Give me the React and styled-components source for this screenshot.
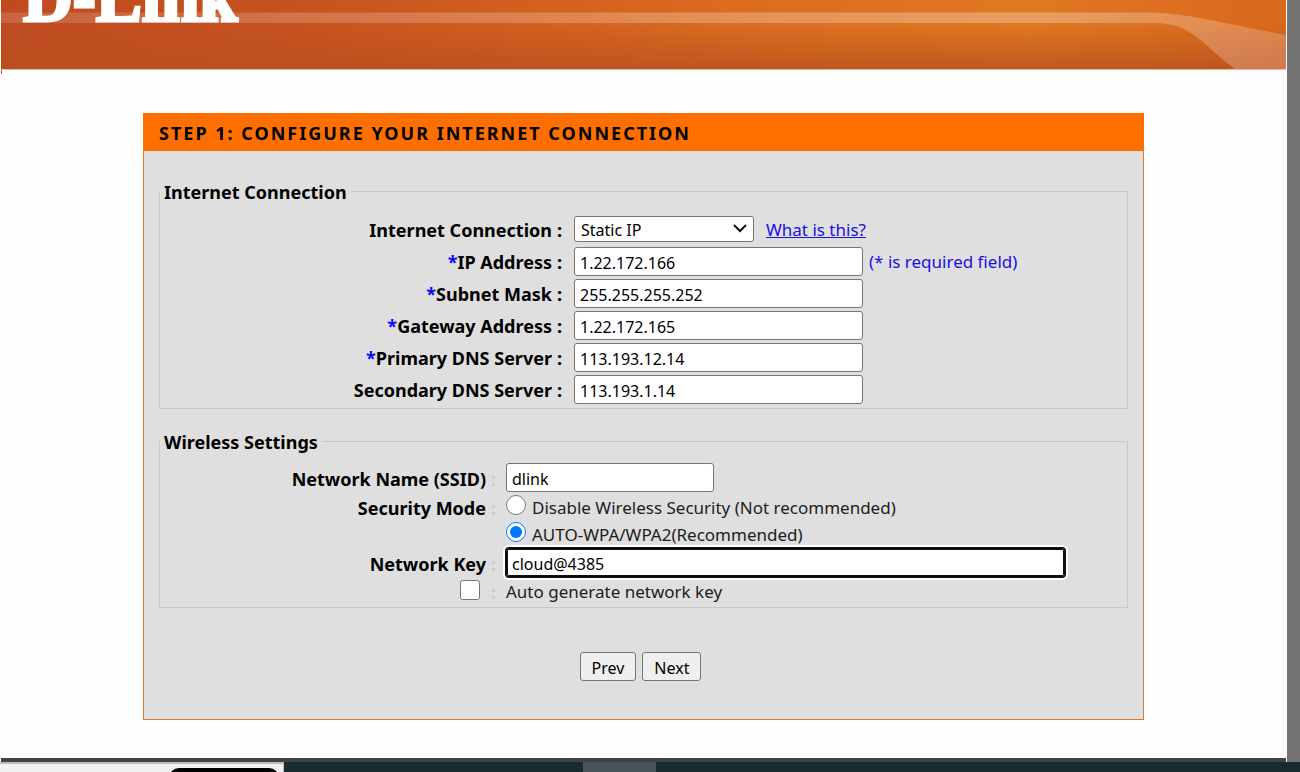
import React from "react";
import styled, { createGlobalStyle } from "styled-components";

const GlobalStyle = createGlobalStyle`
  * { box-sizing: border-box; }
  body {
    margin: 0;
    background: #fefefe;
    color: #000;
    font: 16px/22px "Noto Sans", Tahoma, sans-serif;
  }
  input, select, button { font: inherit; color: inherit; }
`;

const Screen = styled.div`
  display: flex;
  flex-direction: column;
  min-height: 100vh;
`;

const Browser = styled.div`
  display: flex;
  flex: 1;
`;

const Page = styled.div`
  flex: 1;
  min-width: 0;
  display: flex;
  flex-direction: column;
  margin: 0 1px;
`;

const PageEdge = styled.div`
  width: 13px;
  background: #737373;
`;

const Banner = styled.header`
  position: relative;
  height: 70px;
  overflow: hidden;
  border-bottom: 1px solid #e9b79c;
`;

const BannerArt = styled.svg`
  display: block;
  width: 100%;
  height: 69px;
`;

const Logo = styled.div`
  position: absolute;
  left: 22px;
  bottom: 37px;
  font: bold 69px/68px "Liberation Serif", serif;
  color: #fff;
  -webkit-text-stroke: 3px #fff;
`;

const BannerTick = styled.div`
  width: 1px;
  height: 4px;
  background: #a05a45;
`;

const Content = styled.main`
  flex: 1;
  padding: 39px 16px 38px;
`;

const Panel = styled.form`
  max-width: 1001px;
  margin: 0 auto;
  background: #dfdfdf;
  border: 1px solid #d97b32;
`;

const PanelTitle = styled.h1`
  margin: -1px -1px 0;
  padding: 9px 16px 7px;
  background: #ff6f00;
  font-size: 18px;
  line-height: 22px;
  letter-spacing: 2px;
  text-transform: uppercase;
`;

const PanelBody = styled.div`
  padding: 29px 15px 38px;
`;

const Group = styled.fieldset`
  margin: 0 0 21px;
  padding: 11px 0 3px;
  border: 1px solid #c9c9c9;
  min-width: 0;
`;

const Legend = styled.legend`
  padding: 2px 4px 0;
  font-size: 18px;
  line-height: 20px;
  font-weight: bold;
`;

const Row = styled.div`
  display: flex;
  align-items: center;
  min-height: ${(p) => p.$height || 32}px;
`;

const LabelCell = styled.div`
  flex: none;
  width: ${(p) => p.$width}px;
  padding-top: 2px;
  display: flex;
  justify-content: flex-end;
  font-size: 18px;
  font-weight: bold;
`;

const Colon = styled.span`
  flex: none;
  width: ${(p) => (p.$faint ? 20 : 22)}px;
  padding: 2px 0 0 5px;
  font-size: 18px;
  font-weight: bold;
  color: ${(p) => (p.$faint ? "#cdcdcd" : "#000")};
`;

const Star = styled.span`
  color: #0a0aff;
`;

const TextInput = styled.input`
  width: ${(p) => p.$width}px;
  height: 29px;
  padding: 3px 5px 0;
  background: #fff;
  border: 1px solid #767676;
  border-radius: 3px;
  outline: none;
  ${(p) =>
    p.$active &&
    `
    border-color: #101010;
    box-shadow: inset 0 0 0 1px #101010, 0 0 0 1px #101010, 0 0 0 3px #fff;
  `}
`;

const SelectBox = styled.div`
  position: relative;
  width: 180px;
`;

const Select = styled.select`
  appearance: none;
  display: block;
  width: 100%;
  height: 26px;
  padding: 1px 6px 0;
  background: #fff;
  border: 1px solid #767676;
  border-radius: 3px;
`;

const Chevron = styled.svg`
  position: absolute;
  right: 7px;
  top: 8px;
  pointer-events: none;
`;

const HelpLink = styled.a`
  margin-left: 12px;
  padding-top: 2px;
  font-size: 17px;
  color: #1a10e0;
`;

const Note = styled.span`
  margin-left: 6px;
  padding-top: 2px;
  font-size: 17px;
  color: #1a10e0;
`;

const ChoiceLabel = styled.label`
  padding-top: 2px;
  font-size: 17px;
  color: #1c1c1c;
`;

const Choice = styled.input`
  flex: none;
  width: 20px;
  height: 20px;
  margin: 0 6px 4px 0;
  accent-color: #0075ff;
`;

const Actions = styled.div`
  display: flex;
  justify-content: center;
  gap: 6px;
  padding: 23px 6px 0 0;
`;

const Button = styled.button`
  height: 29px;
  padding: 2px 11px 0;
  background: #efefef;
  border: 1px solid #767676;
  border-radius: 3px;
`;

const PageFoot = styled.div`
  height: 4px;
  background: #404243;
`;

const Taskbar = styled.footer`
  display: flex;
  height: 10px;
  background: #1a2b30;
  overflow: hidden;
`;

const TaskPreview = styled.div`
  width: 284px;
  margin-right: 299px;
  display: flex;
  justify-content: flex-end;
  padding: 4px 4px 0 0;
  background: #f1f1f1;
  border-top: 2px solid #bdbdbd;
  border-right: 1px solid #bdbdbd;
`;

const PreviewPill = styled.div`
  width: 110px;
  height: 20px;
  border-radius: 10px;
  background: #000;
`;

const TaskItem = styled.div`
  width: 73px;
  background: #48545a;
`;

const ADDRESSES = [
  { id: "ip", label: "IP Address", value: "1.22.172.166", required: true, note: "(* is required field)" },
  { id: "mask", label: "Subnet Mask", value: "255.255.255.252", required: true },
  { id: "gateway", label: "Gateway Address", value: "1.22.172.165", required: true },
  { id: "dns1", label: "Primary DNS Server", value: "113.193.12.14", required: true },
  { id: "dns2", label: "Secondary DNS Server", value: "113.193.1.14" },
];

function BannerDrawing() {
  return (
    <BannerArt viewBox="0 0 1285 69" preserveAspectRatio="none" aria-hidden="true">
      <defs>
        <linearGradient id="base" x1="0" x2="1" y1="0" y2="0">
          <stop offset="0" stopColor="#bf4a20" />
          <stop offset="0.23" stopColor="#c75220" />
          <stop offset="0.42" stopColor="#d3601f" />
          <stop offset="0.6" stopColor="#dc6e20" />
          <stop offset="0.8" stopColor="#e07823" />
          <stop offset="1" stopColor="#d8681d" />
        </linearGradient>
        <linearGradient id="shade" x1="0" x2="0" y1="0" y2="1">
          <stop offset="0.35" stopColor="#b8501f" stopOpacity="0" />
          <stop offset="1" stopColor="#b8501f" stopOpacity="0.8" />
        </linearGradient>
        <linearGradient id="beam" x1="0" x2="1" y1="0" y2="0">
          <stop offset="0" stopColor="#fff" stopOpacity="0.14" />
          <stop offset="0.5" stopColor="#fff" stopOpacity="0.24" />
          <stop offset="0.8" stopColor="#fff" stopOpacity="0.28" />
          <stop offset="1" stopColor="#f3cdbb" stopOpacity="0.3" />
        </linearGradient>
      </defs>
      <rect width="1285" height="69" fill="url(#base)" />
      <rect width="1285" height="69" fill="url(#shade)" />
      <path
        d="M0 12.5H1145C1182 12.5 1206 20 1285 35V69H1234C1214 54 1206 44 1190 33C1176 24 1166 23 1145 23H0Z"
        fill="url(#beam)"
      />
    </BannerArt>
  );
}

export default function App() {
  return (
    <Screen>
      <GlobalStyle />
      <Browser>
        <Page>
          <Banner>
            <BannerDrawing />
            <Logo>D-Link</Logo>
          </Banner>
          <BannerTick />
          <Content>
            <Panel onSubmit={(e) => e.preventDefault()}>
              <PanelTitle>Step 1: Configure your internet connection</PanelTitle>
              <PanelBody>
                <Group>
                  <Legend>Internet Connection</Legend>
                  <Row>
                    <LabelCell $width={392}>
                      <label htmlFor="connection">Internet Connection</label>
                    </LabelCell>
                    <Colon>:</Colon>
                    <SelectBox>
                      <Select id="connection" defaultValue="static">
                        <option value="static">Static IP</option>
                        <option value="dynamic">Dynamic IP</option>
                      </Select>
                      <Chevron width="14" height="9" viewBox="0 0 14 9" aria-hidden="true">
                        <path d="M1 1L7 7L13 1" fill="none" stroke="#111" strokeWidth="2" />
                      </Chevron>
                    </SelectBox>
                    <HelpLink href="#help">What is this?</HelpLink>
                  </Row>
                  {ADDRESSES.map((f) => (
                    <Row key={f.id}>
                      <LabelCell $width={392}>
                        <label htmlFor={f.id}>
                          {f.required && <Star>*</Star>}
                          {f.label}
                        </label>
                      </LabelCell>
                      <Colon>:</Colon>
                      <TextInput id={f.id} $width={289} defaultValue={f.value} />
                      {f.note && <Note>{f.note}</Note>}
                    </Row>
                  ))}
                </Group>

                <Group>
                  <Legend>Wireless Settings</Legend>
                  <Row $height={29}>
                    <LabelCell $width={326}>
                      <label htmlFor="ssid">Network Name (SSID)</label>
                    </LabelCell>
                    <Colon $faint>:</Colon>
                    <TextInput id="ssid" $width={208} defaultValue="dlink" />
                  </Row>
                  <Row $height={29}>
                    <LabelCell $width={326}>Security Mode</LabelCell>
                    <Colon $faint>:</Colon>
                    <Choice type="radio" name="security" id="open" />
                    <ChoiceLabel htmlFor="open">Disable Wireless Security (Not recommended)</ChoiceLabel>
                  </Row>
                  <Row $height={26}>
                    <LabelCell $width={326} />
                    <Colon $faint />
                    <Choice type="radio" name="security" id="wpa" defaultChecked />
                    <ChoiceLabel htmlFor="wpa">AUTO-WPA/WPA2(Recommended)</ChoiceLabel>
                  </Row>
                  <Row $height={31}>
                    <LabelCell $width={326}>
                      <label htmlFor="key">Network Key</label>
                    </LabelCell>
                    <Colon $faint>:</Colon>
                    <TextInput id="key" $width={559} $active defaultValue="cloud@4385" />
                  </Row>
                  <Row $height={26}>
                    <LabelCell $width={326}>
                      <Choice type="checkbox" id="auto" />
                    </LabelCell>
                    <Colon $faint>:</Colon>
                    <ChoiceLabel htmlFor="auto">Auto generate network key</ChoiceLabel>
                  </Row>
                </Group>

                <Actions>
                  <Button type="button">Prev</Button>
                  <Button type="submit">Next</Button>
                </Actions>
              </PanelBody>
            </Panel>
          </Content>
          <PageFoot />
        </Page>
        <PageEdge />
      </Browser>
      <Taskbar>
        <TaskPreview>
          <PreviewPill />
        </TaskPreview>
        <TaskItem />
      </Taskbar>
    </Screen>
  );
}
